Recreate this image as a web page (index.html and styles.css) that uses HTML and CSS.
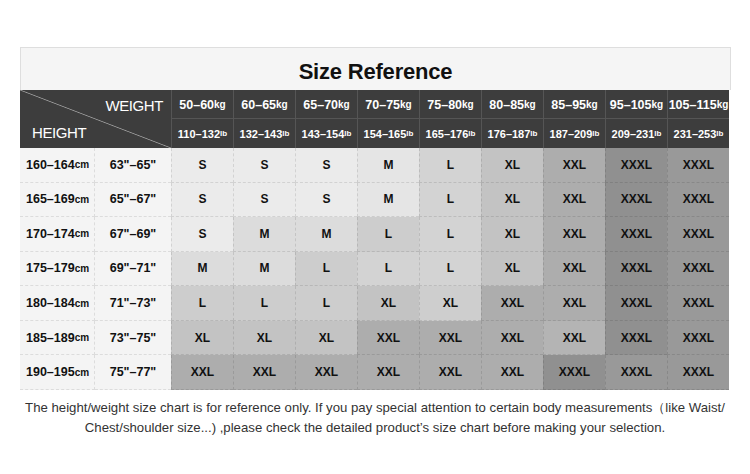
FILE: index.html
```html
<!DOCTYPE html>
<html>
<head>
<meta charset="utf-8">
<link rel="stylesheet" href="styles.css">
</head>
<body>
<div class="page">
  <div class="chart">
    <div class="title">Size Reference</div>
    <div class="grid">
      <div class="corner"><span class="w">WEIGHT</span><span class="h">HEIGHT</span></div>
      <div class="hd kg">50–60<small>kg</small></div>
      <div class="hd kg">60–65<small>kg</small></div>
      <div class="hd kg">65–70<small>kg</small></div>
      <div class="hd kg">70–75<small>kg</small></div>
      <div class="hd kg">75–80<small>kg</small></div>
      <div class="hd kg">80–85<small>kg</small></div>
      <div class="hd kg">85–95<small>kg</small></div>
      <div class="hd kg">95–105<small>kg</small></div>
      <div class="hd kg last">105–115<small>kg</small></div>
      <div class="hd lb">110–132<small>lb</small></div>
      <div class="hd lb">132–143<small>lb</small></div>
      <div class="hd lb">143–154<small>lb</small></div>
      <div class="hd lb">154–165<small>lb</small></div>
      <div class="hd lb">165–176<small>lb</small></div>
      <div class="hd lb">176–187<small>lb</small></div>
      <div class="hd lb">187–209<small>lb</small></div>
      <div class="hd lb">209–231<small>lb</small></div>
      <div class="hd lb last">231–253<small>lb</small></div>

      <div class="cm">160–164<small>cm</small></div><div class="in">63"–65"</div>
      <div class="c s">S</div><div class="c s">S</div><div class="c s">S</div><div class="c m2">M</div><div class="c l2">L</div><div class="c xl">XL</div><div class="c xxl">XXL</div><div class="c x3">XXXL</div><div class="c x3b">XXXL</div>

      <div class="cm">165–169<small>cm</small></div><div class="in">65"–67"</div>
      <div class="c s">S</div><div class="c s">S</div><div class="c s">S</div><div class="c m2">M</div><div class="c l2">L</div><div class="c xl">XL</div><div class="c xxl">XXL</div><div class="c x3">XXXL</div><div class="c x3b">XXXL</div>

      <div class="cm">170–174<small>cm</small></div><div class="in">67"–69"</div>
      <div class="c s">S</div><div class="c m">M</div><div class="c m">M</div><div class="c l">L</div><div class="c l2">L</div><div class="c xl">XL</div><div class="c xxl">XXL</div><div class="c x3">XXXL</div><div class="c x3b">XXXL</div>

      <div class="cm">175–179<small>cm</small></div><div class="in">69"–71"</div>
      <div class="c m">M</div><div class="c m">M</div><div class="c l">L</div><div class="c l2">L</div><div class="c l2">L</div><div class="c xl">XL</div><div class="c xxl">XXL</div><div class="c x3">XXXL</div><div class="c x3b">XXXL</div>

      <div class="cm">180–184<small>cm</small></div><div class="in">71"–73"</div>
      <div class="c l">L</div><div class="c l">L</div><div class="c l">L</div><div class="c xl">XL</div><div class="c xl2">XL</div><div class="c xxl">XXL</div><div class="c xxl">XXL</div><div class="c x3">XXXL</div><div class="c x3b">XXXL</div>

      <div class="cm">185–189<small>cm</small></div><div class="in">73"–75"</div>
      <div class="c xl">XL</div><div class="c xl">XL</div><div class="c xl">XL</div><div class="c xxl">XXL</div><div class="c xxl">XXL</div><div class="c xxl">XXL</div><div class="c xxl2">XXL</div><div class="c x3">XXXL</div><div class="c x3b">XXXL</div>

      <div class="cm">190–195<small>cm</small></div><div class="in">75"–77"</div>
      <div class="c xxl">XXL</div><div class="c xxl">XXL</div><div class="c xxl">XXL</div><div class="c xxl">XXL</div><div class="c xxl">XXL</div><div class="c xxl">XXL</div><div class="c x3">XXXL</div><div class="c x3b">XXXL</div><div class="c x3b">XXXL</div>
    </div>
  </div>
  <p class="note">The height/weight size chart is for reference only. If you pay special attention to certain body measurements（like Waist/<br>Chest/shoulder size...) ,please check the detailed product’s size chart before making your selection.</p>
</div>
</body>
</html>
```

FILE: styles.css
```css
* { box-sizing: border-box; }
html, body { margin: 0; padding: 0; background: #ffffff; }
body { font-family: "Liberation Sans", Arial, sans-serif; }

.page { width: 750px; height: 474px; padding-top: 47px; }

.chart { margin-left: 20px; width: 711px; }

.title {
  height: 43px;
  background: #f5f5f5;
  border: 1px solid #dedede;
  border-bottom: none;
  display: flex;
  align-items: center;
  justify-content: center;
  font-size: 22px;
  font-weight: bold;
  color: #111;
  padding-top: 5px;
  letter-spacing: -0.2px;
}

.grid {
  display: grid;
  grid-template-columns: 75px 76px repeat(9, 62px);
  grid-template-rows: 29px 29px repeat(7, 1fr);
  height: 300px;
  font-weight: bold;
}

.corner {
  grid-column: 1 / 3;
  grid-row: 1 / 3;
  background:
    linear-gradient(to top right, rgba(0,0,0,0) calc(50% - 0.8px), #9a9a9a 50%, rgba(0,0,0,0) calc(50% + 0.8px)),
    #3d3d3d;
  color: #fff;
  font-weight: normal;
  font-size: 15px;
  display: flex;
  flex-direction: column;
  justify-content: space-between;
  padding: 7px 8px 7px 12px;
  letter-spacing: -0.4px;
}
.corner .w { align-self: flex-end; }
.corner .h { align-self: flex-start; }

.hd {
  background: #3d3d3d;
  color: #fff;
  display: flex;
  align-items: center;
  justify-content: center;
  border-left: 1px solid #555;
  white-space: nowrap;
}
.hd.kg { font-size: 12.5px; border-bottom: 1px solid #555; padding-top: 1px; }
.hd.kg small { font-size: 10px; }
.hd.lb { font-size: 11px; }
.hd.lb small { font-size: 8px; }

.cm, .in {
  background: #f4f4f4;
  display: flex;
  align-items: center;
  color: #111;
  border-bottom: 1px dashed #dcdcdc;
}
.cm { font-size: 12.5px; padding-left: 6px; border-right: 1px dashed #dcdcdc; white-space: nowrap; }
.cm small { font-size: 10px; }
.in { font-size: 12.5px; justify-content: center; }

.c {
  display: flex;
  align-items: center;
  justify-content: center;
  font-size: 12px;
  color: #111;
  border-left: 1px dashed rgba(0,0,0,0.1);
  border-bottom: 1px dashed rgba(0,0,0,0.1);
}
.c.s { background: #ebebeb; }
.c.m { background: #dcdcdc; }
.c.m2 { background: #e5e5e5; }
.c.l { background: #cdcdcd; }
.c.l2 { background: #d3d3d3; }
.c.xl { background: #c3c3c3; }
.c.xl2 { background: #cecece; }
.c.xxl { background: #adadad; }
.c.xxl2 { background: #b4b4b4; }
.c.x3 { background: #909090; }
.c.x3b { background: #999999; }

.note {
  margin: 8px 0 0;
  text-align: center;
  font-size: 13.2px;
  line-height: 20px;
  color: #333;
}
```
